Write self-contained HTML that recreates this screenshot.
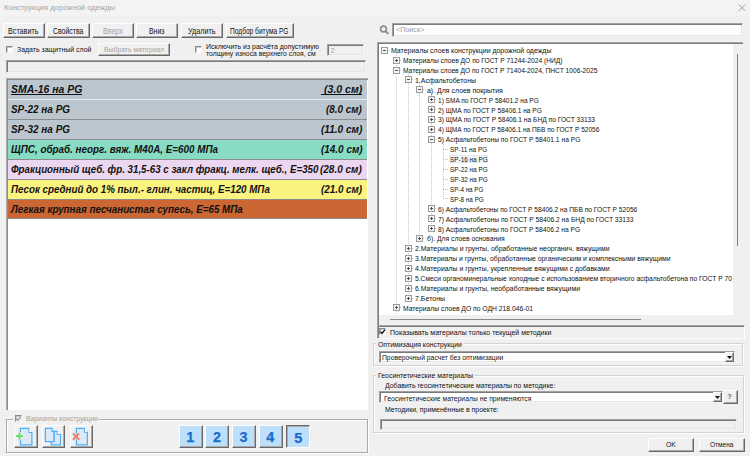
<!DOCTYPE html>
<html><head><meta charset="utf-8"><style>
*{margin:0;padding:0;box-sizing:border-box}
html,body{width:750px;height:456px;overflow:hidden;background:#f0f0f0;font-family:"Liberation Sans",sans-serif;color:#000}
.a{position:absolute}
.t{position:absolute;white-space:nowrap}
</style></head><body>
<div class="a" style="left:0px;top:0px;width:750px;height:16px;background:#f3f3f3"></div>
<div class="t" style="left:4.3px;top:3.9px;font-size:7.7px;line-height:7.7px;color:#a6a6a6;transform:scaleX(0.9900);transform-origin:0 0;">Конструкция дорожной одежды</div>
<svg class="a" style="left:738px;top:3.5px" width="8" height="8"><path d="M0.7 0.5L7.2 7M7.2 0.5L0.7 7" stroke="#999" stroke-width="0.9"/></svg>
<div class="a" style="left:3px;top:23px;width:42px;height:15px;background:#f0f0f0;border-top:1px solid #fdfdfd;border-left:1px solid #fdfdfd;border-right:1px solid #696969;border-bottom:1px solid #696969;box-shadow:inset -1px -1px 0 #a9a9a9"></div>
<div class="t" style="left:8.4px;top:26.61px;font-size:8.4px;line-height:8.4px;color:#111;transform:scaleX(0.8592);transform-origin:0 0;">Вставить</div>
<div class="a" style="left:47px;top:23px;width:42.5px;height:15px;background:#f0f0f0;border-top:1px solid #fdfdfd;border-left:1px solid #fdfdfd;border-right:1px solid #696969;border-bottom:1px solid #696969;box-shadow:inset -1px -1px 0 #a9a9a9"></div>
<div class="t" style="left:53.2px;top:26.61px;font-size:8.4px;line-height:8.4px;color:#111;transform:scaleX(0.8265);transform-origin:0 0;">Свойства</div>
<div class="a" style="left:92px;top:23px;width:41.5px;height:15px;background:#f0f0f0;border-top:1px solid #fdfdfd;border-left:1px solid #fdfdfd;border-right:1px solid #696969;border-bottom:1px solid #696969;box-shadow:inset -1px -1px 0 #a9a9a9"></div>
<div class="t" style="left:103px;top:26.61px;font-size:8.4px;line-height:8.4px;color:#a3a3a3;transform:scaleX(0.8433);transform-origin:0 0;">Вверх</div>
<div class="a" style="left:136px;top:23px;width:42px;height:15px;background:#f0f0f0;border-top:1px solid #fdfdfd;border-left:1px solid #fdfdfd;border-right:1px solid #696969;border-bottom:1px solid #696969;box-shadow:inset -1px -1px 0 #a9a9a9"></div>
<div class="t" style="left:149.3px;top:26.61px;font-size:8.4px;line-height:8.4px;color:#111;transform:scaleX(0.8274);transform-origin:0 0;">Вниз</div>
<div class="a" style="left:181px;top:23px;width:41.5px;height:15px;background:#f0f0f0;border-top:1px solid #fdfdfd;border-left:1px solid #fdfdfd;border-right:1px solid #696969;border-bottom:1px solid #696969;box-shadow:inset -1px -1px 0 #a9a9a9"></div>
<div class="t" style="left:188.3px;top:26.61px;font-size:8.4px;line-height:8.4px;color:#111;transform:scaleX(0.8629);transform-origin:0 0;">Удалить</div>
<div class="a" style="left:225.5px;top:23px;width:68px;height:15px;background:#f0f0f0;border-top:1px solid #fdfdfd;border-left:1px solid #fdfdfd;border-right:1px solid #696969;border-bottom:1px solid #696969;box-shadow:inset -1px -1px 0 #a9a9a9"></div>
<div class="t" style="left:230.2px;top:26.61px;font-size:8.4px;line-height:8.4px;color:#111;transform:scaleX(0.7887);transform-origin:0 0;">Подбор битума PG</div>
<div class="a" style="left:6px;top:46px;width:7px;height:7px;background:#fff;border-top:1px solid #8a8a8a;border-left:1px solid #8a8a8a;border-right:1px solid #f8f8f8;border-bottom:1px solid #f8f8f8;box-shadow:inset 1px 1px 0 #c8c8c8"></div>
<div class="t" style="left:16.8px;top:45.91px;font-size:7.6px;line-height:7.6px;color:#111;transform:scaleX(0.9152);transform-origin:0 0;">Задать защитный слой</div>
<div class="a" style="left:98px;top:43px;width:71.5px;height:13px;background:#f0f0f0;border-top:1px solid #fdfdfd;border-left:1px solid #fdfdfd;border-right:1px solid #696969;border-bottom:1px solid #696969;box-shadow:inset -1px -1px 0 #a9a9a9"></div>
<div class="t" style="left:104px;top:45.71px;font-size:7.6px;line-height:7.6px;color:#a3a3a3;transform:scaleX(0.9008);transform-origin:0 0;">Выбрать материал</div>
<div class="a" style="left:195px;top:46px;width:7px;height:7px;background:#fff;border-top:1px solid #8a8a8a;border-left:1px solid #8a8a8a;border-right:1px solid #f8f8f8;border-bottom:1px solid #f8f8f8;box-shadow:inset 1px 1px 0 #c8c8c8"></div>
<div class="t" style="left:205.7px;top:42.84px;font-size:7.3px;line-height:7.3px;color:#111;transform:scaleX(0.9556);transform-origin:0 0;">Исключить из расчёта допустимую</div>
<div class="t" style="left:205.7px;top:50.04px;font-size:7.3px;line-height:7.3px;color:#111;transform:scaleX(0.9341);transform-origin:0 0;">толщину износа верхнего слоя, см</div>
<div class="a" style="left:327px;top:44px;width:37px;height:12px;background:#f0f0f0;border-top:1px solid #a0a0a0;border-left:1px solid #a0a0a0;border-right:1px solid #f4f4f4;border-bottom:1px solid #f4f4f4;box-shadow:inset 1px 1px 0 #7a7a7a,inset -1px -1px 0 #e6e6e6"></div>
<div class="t" style="left:330.6px;top:47.01px;font-size:7.6px;line-height:7.6px;color:#a3a3a3;">2</div>
<div class="a" style="left:6px;top:60px;width:360px;height:13px;background:#f0f0f0;border-top:1px solid #a0a0a0;border-left:1px solid #a0a0a0;border-right:1px solid #f4f4f4;border-bottom:1px solid #f4f4f4;box-shadow:inset 1px 1px 0 #7a7a7a,inset -1px -1px 0 #e6e6e6"></div>
<div class="a" style="left:6px;top:78px;width:362px;height:331.5px;background:#fff;border-top:1px solid #adadad;border-left:1px solid #adadad;box-shadow:inset 1px 1px 0 #8c8c8c"></div>
<div class="a" style="left:8px;top:80px;width:359px;height:19.2px;background:#bcc6ce"></div>
<div class="a" style="left:11px;top:93.6px;width:71px;height:1.1px;background:#111"></div>
<div class="a" style="left:320.5px;top:93.6px;width:41px;height:1.1px;background:#111"></div>
<div class="t" style="left:11px;top:85.08px;font-size:10.4px;line-height:10.4px;color:#111;font-weight:bold;font-style:italic;transform:scaleX(1.0049);transform-origin:0 0;">SMA-16 на PG</div>
<div class="t" style="left:323.8px;top:85.08px;font-size:10.4px;line-height:10.4px;color:#111;font-weight:bold;font-style:italic;transform:scaleX(1.0154);transform-origin:0 0;">(3.0 см)</div>
<div class="a" style="left:8px;top:99px;width:359px;height:20px;background:#bcc6ce;border-top:1px solid #e8ecef"></div>
<div class="t" style="left:11px;top:105.08px;font-size:10.4px;line-height:10.4px;color:#111;font-weight:bold;font-style:italic;transform:scaleX(0.9557);transform-origin:0 0;">SP-22 на PG</div>
<div class="t" style="left:326.4px;top:105.08px;font-size:10.4px;line-height:10.4px;color:#111;font-weight:bold;font-style:italic;transform:scaleX(0.9465);transform-origin:0 0;">(8.0 см)</div>
<div class="a" style="left:8px;top:119px;width:359px;height:20px;background:#bcc6ce;border-top:1px solid #8c8c8c"></div>
<div class="t" style="left:11px;top:125.08px;font-size:10.4px;line-height:10.4px;color:#111;font-weight:bold;font-style:italic;transform:scaleX(0.9557);transform-origin:0 0;">SP-32 на PG</div>
<div class="t" style="left:320.8px;top:125.08px;font-size:10.4px;line-height:10.4px;color:#111;font-weight:bold;font-style:italic;transform:scaleX(0.9664);transform-origin:0 0;">(11.0 см)</div>
<div class="a" style="left:8px;top:139px;width:359px;height:20px;background:#88dcc4;border-top:1px solid #8c8c8c"></div>
<div class="t" style="left:11px;top:145.08px;font-size:10.4px;line-height:10.4px;color:#111;font-weight:bold;font-style:italic;transform:scaleX(0.9474);transform-origin:0 0;">ЩПС, обраб. неорг. вяж. М40А, Е=600 МПа</div>
<div class="t" style="left:320.5px;top:145.08px;font-size:10.4px;line-height:10.4px;color:#111;font-weight:bold;font-style:italic;transform:scaleX(0.9563);transform-origin:0 0;">(14.0 см)</div>
<div class="a" style="left:8px;top:159px;width:359px;height:20px;background:#ecd7f0;border-top:1px solid #8c8c8c"></div>
<div class="t" style="left:11px;top:165.08px;font-size:10.4px;line-height:10.4px;color:#111;font-weight:bold;font-style:italic;transform:scaleX(0.9367);transform-origin:0 0;">Фракционный щеб. фр. 31,5-63 с закл фракц. мелк. щеб., Е=350</div>
<div class="t" style="left:320.4px;top:165.08px;font-size:10.4px;line-height:10.4px;color:#111;font-weight:bold;font-style:italic;transform:scaleX(0.9586);transform-origin:0 0;">(28.0 см)</div>
<div class="a" style="left:8px;top:179px;width:359px;height:20px;background:#fbf380;border-top:1px solid #8c8c8c"></div>
<div class="t" style="left:11px;top:185.08px;font-size:10.4px;line-height:10.4px;color:#111;font-weight:bold;font-style:italic;transform:scaleX(0.9388);transform-origin:0 0;">Песок средний до 1% пыл.- глин. частиц, Е=120 МПа</div>
<div class="t" style="left:321px;top:185.08px;font-size:10.4px;line-height:10.4px;color:#111;font-weight:bold;font-style:italic;transform:scaleX(0.9448);transform-origin:0 0;">(21.0 см)</div>
<div class="a" style="left:8px;top:199px;width:359px;height:20px;background:#cc6633;border-top:1px solid #8c8c8c"></div>
<div class="t" style="left:11px;top:205.08px;font-size:10.4px;line-height:10.4px;color:#111;font-weight:bold;font-style:italic;transform:scaleX(0.9429);transform-origin:0 0;">Легкая крупная песчанистая супесь, Е=65 МПа</div>
<div class="a" style="left:8px;top:218.2px;width:359px;height:1px;background:#8c8c8c"></div>
<div class="a" style="left:6px;top:419px;width:361.5px;height:34px;border:1px solid #ababab;box-shadow:inset 1px 1px 0 #fff, 1px 1px 0 #fff"></div>
<div class="a" style="left:13px;top:414px;width:86px;height:9px;background:#f0f0f0"></div>
<div class="a" style="left:15.4px;top:414.8px;width:7px;height:7px;background:#f0f0f0;border-top:1px solid #8a8a8a;border-left:1px solid #8a8a8a;border-right:1px solid #f8f8f8;border-bottom:1px solid #f8f8f8;box-shadow:inset 1px 1px 0 #c8c8c8"></div>
<svg class="a" style="left:15.4px;top:414.8px" width="7" height="7"><path d="M1.5 3.6L3 5.4L6 1.6" stroke="#a0a0a0" stroke-width="1.4" fill="none"/></svg>
<div class="t" style="left:25.8px;top:415.14px;font-size:7.3px;line-height:7.3px;color:#a3a3a3;transform:scaleX(0.9319);transform-origin:0 0;">Варианты конструкции</div>
<div class="a" style="left:13.5px;top:425px;width:24px;height:23px;background:#f0f0f0;border-top:1px solid #fdfdfd;border-left:1px solid #fdfdfd;border-right:1px solid #696969;border-bottom:1px solid #696969;box-shadow:inset -1px -1px 0 #a9a9a9"></div>
<div class="a" style="left:41.6px;top:425px;width:23.4px;height:23px;background:#f0f0f0;border-top:1px solid #fdfdfd;border-left:1px solid #fdfdfd;border-right:1px solid #696969;border-bottom:1px solid #696969;box-shadow:inset -1px -1px 0 #a9a9a9"></div>
<div class="a" style="left:69.6px;top:425px;width:23.4px;height:23px;background:#f0f0f0;border-top:1px solid #fdfdfd;border-left:1px solid #fdfdfd;border-right:1px solid #696969;border-bottom:1px solid #696969;box-shadow:inset -1px -1px 0 #a9a9a9"></div>
<svg class="a" style="left:13px;top:424px" width="25" height="24"><path d="M7.4 4.4H15.9V8.3H18.9V20.8H7.4Z" fill="#dde9f7" stroke="#4db0fa" stroke-width="1.25" stroke-linejoin="round"/><path d="M16.4 4.6L18.7 7.8H16.4Z" fill="#fff"/><path d="M6.5 8.2V16.2M2.6 12.2H10.4" stroke="#f0f0f0" stroke-width="3.2"/><path d="M6.5 8.7V15.7M3 12.2H10" stroke="#56e05a" stroke-width="1.7"/></svg>
<svg class="a" style="left:41px;top:424px" width="25" height="24"><path d="M4.4 4.4H11.2V7.4H13.2V17.5H4.4Z" fill="#dde9f7" stroke="#4db0fa" stroke-width="1.25" stroke-linejoin="round"/><path d="M13.2 7.4H16.2V10.4H19.5V20.8H10.1V17.5H13.2Z" fill="#dde9f7" stroke="#4db0fa" stroke-width="1.25" stroke-linejoin="round"/><path d="M16.7 7.6L19.3 10H16.7Z" fill="#fff"/></svg>
<svg class="a" style="left:69px;top:424px" width="25" height="24"><path d="M7.4 4.4H15.4V8.2H18.4V20.8H7.4Z" fill="#dde9f7" stroke="#4db0fa" stroke-width="1.25" stroke-linejoin="round"/><path d="M15.9 4.6L18.2 7.7H15.9Z" fill="#fff"/><path d="M3.7 9.1L10.5 16.1M10.5 9.1L3.7 16.1" stroke="#f0f0f0" stroke-width="3.4"/><path d="M4 9.4L10.2 15.8M10.2 9.4L4 15.8" stroke="#e5806c" stroke-width="2"/></svg>
<div class="a" style="left:178.6px;top:425.2px;width:24.2px;height:22.8px;background:#bddff9;border-top:1px solid #fdfdfd;border-left:1px solid #fdfdfd;border-right:1px solid #696969;border-bottom:1px solid #696969;box-shadow:inset -1px -1px 0 #a9a9a9"></div>
<div class="t" style="left:178.3px;top:429.5px;width:24px;text-align:center;font:bold 14.4px/14.4px 'Liberation Sans',sans-serif;color:#1a6ccc;-webkit-text-stroke:0.25px #1a6ccc">1</div>
<div class="a" style="left:205.2px;top:425.2px;width:24.2px;height:22.8px;background:#bddff9;border-top:1px solid #fdfdfd;border-left:1px solid #fdfdfd;border-right:1px solid #696969;border-bottom:1px solid #696969;box-shadow:inset -1px -1px 0 #a9a9a9"></div>
<div class="t" style="left:204.9px;top:429.5px;width:24px;text-align:center;font:bold 14.4px/14.4px 'Liberation Sans',sans-serif;color:#1a6ccc;-webkit-text-stroke:0.25px #1a6ccc">2</div>
<div class="a" style="left:231.8px;top:425.2px;width:24.2px;height:22.8px;background:#bddff9;border-top:1px solid #fdfdfd;border-left:1px solid #fdfdfd;border-right:1px solid #696969;border-bottom:1px solid #696969;box-shadow:inset -1px -1px 0 #a9a9a9"></div>
<div class="t" style="left:231.5px;top:429.5px;width:24px;text-align:center;font:bold 14.4px/14.4px 'Liberation Sans',sans-serif;color:#1a6ccc;-webkit-text-stroke:0.25px #1a6ccc">3</div>
<div class="a" style="left:258.6px;top:425.2px;width:24.2px;height:22.8px;background:#bddff9;border-top:1px solid #fdfdfd;border-left:1px solid #fdfdfd;border-right:1px solid #696969;border-bottom:1px solid #696969;box-shadow:inset -1px -1px 0 #a9a9a9"></div>
<div class="t" style="left:258.3px;top:429.5px;width:24px;text-align:center;font:bold 14.4px/14.4px 'Liberation Sans',sans-serif;color:#1a6ccc;-webkit-text-stroke:0.25px #1a6ccc">4</div>
<div class="a" style="left:285.6px;top:425.2px;width:24.2px;height:22.8px;background:#bddff9;border-top:1px solid #696969;border-left:1px solid #696969;border-right:1px solid #fdfdfd;border-bottom:1px solid #fdfdfd;box-shadow:inset 1px 1px 0 #a9a9a9"></div>
<div class="t" style="left:286.3px;top:430.5px;width:24px;text-align:center;font:bold 14.4px/14.4px 'Liberation Sans',sans-serif;color:#1a6ccc;-webkit-text-stroke:0.25px #1a6ccc">5</div>
<svg class="a" style="left:379px;top:24px" width="12" height="12"><circle cx="4.5" cy="5" r="2.9" fill="none" stroke="#8c8c8c" stroke-width="1.6"/><path d="M6.6 7.1L9.4 9.9" stroke="#8c8c8c" stroke-width="2"/></svg>
<div class="a" style="left:392px;top:23px;width:350.5px;height:14px;background:#fff;border-top:1px solid #a0a0a0;border-left:1px solid #a0a0a0;border-right:1px solid #f4f4f4;border-bottom:1px solid #f4f4f4;box-shadow:inset 1px 1px 0 #7a7a7a,inset -1px -1px 0 #e6e6e6"></div>
<div class="t" style="left:395.8px;top:26.08px;font-size:7px;line-height:7px;color:#9a9a9a;transform:scaleX(1.0225);transform-origin:0 0;">&lt;Поиск&gt;</div>
<div class="a" style="left:377px;top:42px;width:366px;height:284px;background:#f0f0f0;border-top:1px solid #a4a4a4;border-left:1px solid #a4a4a4;box-shadow:inset 1px 1px 0 #7c7c7c"></div>
<div class="a" style="left:379px;top:44px;width:354px;height:271px;background:#fff"></div>
<div class="a" style="left:389.6px;top:318.7px;width:251.4px;height:1.6px;background:#8a8a8a"></div>
<div class="a" style="left:736.7px;top:54px;width:1.6px;height:192px;background:#808080"></div>
<div class="a" style="left:377px;top:325px;width:367.5px;height:13.5px;background:#f0f0f0;border-top:1px solid #a4a4a4;border-left:1px solid #a4a4a4;border-right:1px solid #fff;border-bottom:1px solid #fff;box-shadow:inset 1px 1px 0 #7c7c7c"></div>
<div class="a" style="left:379.2px;top:328px;width:7px;height:7px;background:#fff;border-top:1px solid #8a8a8a;border-left:1px solid #8a8a8a;border-right:1px solid #f8f8f8;border-bottom:1px solid #f8f8f8;box-shadow:inset 1px 1px 0 #c8c8c8"></div>
<svg class="a" style="left:379.2px;top:328px" width="7" height="7"><path d="M1.5 3.6L3 5.4L6 1.6" stroke="#111" stroke-width="1.4" fill="none"/></svg>
<div class="t" style="left:389.6px;top:328.78px;font-size:7px;line-height:7px;color:#111;transform:scaleX(0.9988);transform-origin:0 0;">Показывать материалы только текущей методики</div>
<div class="a" style="left:395.7px;top:53.2px;width:1px;height:261.79px;background:repeating-linear-gradient(to bottom,#c6c6c6 0 1px,transparent 1px 2px)"></div>
<div class="a" style="left:407.5px;top:73.03px;width:1px;height:225.04px;background:repeating-linear-gradient(to bottom,#c6c6c6 0 1px,transparent 1px 2px)"></div>
<div class="a" style="left:419.3px;top:82.94px;width:1px;height:155.64px;background:repeating-linear-gradient(to bottom,#c6c6c6 0 1px,transparent 1px 2px)"></div>
<div class="a" style="left:431.1px;top:92.86px;width:1px;height:135.81px;background:repeating-linear-gradient(to bottom,#c6c6c6 0 1px,transparent 1px 2px)"></div>
<div class="a" style="left:442.9px;top:142.44px;width:1px;height:56.49px;background:repeating-linear-gradient(to bottom,#c6c6c6 0 1px,transparent 1px 2px)"></div>
<div class="a" style="left:388px;top:49.7px;width:1.8px;height:1px;background:repeating-linear-gradient(to right,#c6c6c6 0 1px,transparent 1px 2px)"></div>
<svg class="a" style="left:381px;top:47px" width="7" height="7"><rect x="0.5" y="0.5" width="6" height="6" fill="#f4f4f4" stroke="#9c9c9c" stroke-width="1"/><path d="M2 3.5H5" stroke="#555" stroke-width="1"/></svg>
<div class="t" style="left:390.8px;top:47.08px;font-size:7px;line-height:7px;color:#111;transform:scaleX(0.9918);transform-origin:0 0;">Материалы слоев конструкции дорожной одежды</div>
<div class="a" style="left:400px;top:59.62px;width:1.9px;height:1px;background:repeating-linear-gradient(to right,#c6c6c6 0 1px,transparent 1px 2px)"></div>
<svg class="a" style="left:393px;top:57px" width="7" height="7"><rect x="0.5" y="0.5" width="6" height="6" fill="#f4f4f4" stroke="#9c9c9c" stroke-width="1"/><path d="M2 3.5H5" stroke="#555" stroke-width="1"/><path d="M3.5 2V5" stroke="#555" stroke-width="1"/></svg>
<div class="t" style="left:402.9px;top:56.99px;font-size:7px;line-height:7px;color:#111;transform:scaleX(0.9516);transform-origin:0 0;">Материалы слоев ДО по ГОСТ Р 71244-2024 (НИД)</div>
<div class="a" style="left:400px;top:69.53px;width:1.9px;height:1px;background:repeating-linear-gradient(to right,#c6c6c6 0 1px,transparent 1px 2px)"></div>
<svg class="a" style="left:393px;top:67px" width="7" height="7"><rect x="0.5" y="0.5" width="6" height="6" fill="#f4f4f4" stroke="#9c9c9c" stroke-width="1"/><path d="M2 3.5H5" stroke="#555" stroke-width="1"/></svg>
<div class="t" style="left:402.9px;top:66.91px;font-size:7px;line-height:7px;color:#111;transform:scaleX(0.9498);transform-origin:0 0;">Материалы слоев ДО по ГОСТ Р 71404-2024, ПНСТ 1006-2025</div>
<div class="a" style="left:412px;top:79.44px;width:1.8px;height:1px;background:repeating-linear-gradient(to right,#c6c6c6 0 1px,transparent 1px 2px)"></div>
<svg class="a" style="left:405px;top:76px" width="7" height="7"><rect x="0.5" y="0.5" width="6" height="6" fill="#f4f4f4" stroke="#9c9c9c" stroke-width="1"/><path d="M2 3.5H5" stroke="#555" stroke-width="1"/></svg>
<div class="t" style="left:414.8px;top:76.82px;font-size:7px;line-height:7px;color:#111;transform:scaleX(0.9939);transform-origin:0 0;">1.Асфальтобетоны</div>
<div class="a" style="left:423px;top:89.36px;width:2.5px;height:1px;background:repeating-linear-gradient(to right,#c6c6c6 0 1px,transparent 1px 2px)"></div>
<svg class="a" style="left:416px;top:86px" width="7" height="7"><rect x="0.5" y="0.5" width="6" height="6" fill="#f4f4f4" stroke="#9c9c9c" stroke-width="1"/><path d="M2 3.5H5" stroke="#555" stroke-width="1"/></svg>
<div class="t" style="left:426.5px;top:86.74px;font-size:7px;line-height:7px;color:#111;transform:scaleX(0.9938);transform-origin:0 0;">а). Для слоев покрытия</div>
<div class="a" style="left:435px;top:99.28px;width:2.3px;height:1px;background:repeating-linear-gradient(to right,#c6c6c6 0 1px,transparent 1px 2px)"></div>
<svg class="a" style="left:428px;top:96px" width="7" height="7"><rect x="0.5" y="0.5" width="6" height="6" fill="#f4f4f4" stroke="#9c9c9c" stroke-width="1"/><path d="M2 3.5H5" stroke="#555" stroke-width="1"/><path d="M3.5 2V5" stroke="#555" stroke-width="1"/></svg>
<div class="t" style="left:438.3px;top:96.65px;font-size:7px;line-height:7px;color:#111;transform:scaleX(0.9325);transform-origin:0 0;">1) SMA по ГОСТ Р 58401.2 на PG</div>
<div class="a" style="left:435px;top:109.19px;width:2.3px;height:1px;background:repeating-linear-gradient(to right,#c6c6c6 0 1px,transparent 1px 2px)"></div>
<svg class="a" style="left:428px;top:106px" width="7" height="7"><rect x="0.5" y="0.5" width="6" height="6" fill="#f4f4f4" stroke="#9c9c9c" stroke-width="1"/><path d="M2 3.5H5" stroke="#555" stroke-width="1"/><path d="M3.5 2V5" stroke="#555" stroke-width="1"/></svg>
<div class="t" style="left:438.3px;top:106.57px;font-size:7px;line-height:7px;color:#111;transform:scaleX(0.9404);transform-origin:0 0;">2) ЩМА по ГОСТ Р 58406.1 на PG</div>
<div class="a" style="left:435px;top:119.11px;width:2.3px;height:1px;background:repeating-linear-gradient(to right,#c6c6c6 0 1px,transparent 1px 2px)"></div>
<svg class="a" style="left:428px;top:116px" width="7" height="7"><rect x="0.5" y="0.5" width="6" height="6" fill="#f4f4f4" stroke="#9c9c9c" stroke-width="1"/><path d="M2 3.5H5" stroke="#555" stroke-width="1"/><path d="M3.5 2V5" stroke="#555" stroke-width="1"/></svg>
<div class="t" style="left:438.3px;top:116.48px;font-size:7px;line-height:7px;color:#111;transform:scaleX(0.9482);transform-origin:0 0;">3) ЩМА по ГОСТ Р 58406.1 на БНД по ГОСТ 33133</div>
<div class="a" style="left:435px;top:129.02px;width:2.3px;height:1px;background:repeating-linear-gradient(to right,#c6c6c6 0 1px,transparent 1px 2px)"></div>
<svg class="a" style="left:428px;top:126px" width="7" height="7"><rect x="0.5" y="0.5" width="6" height="6" fill="#f4f4f4" stroke="#9c9c9c" stroke-width="1"/><path d="M2 3.5H5" stroke="#555" stroke-width="1"/><path d="M3.5 2V5" stroke="#555" stroke-width="1"/></svg>
<div class="t" style="left:438.3px;top:126.4px;font-size:7px;line-height:7px;color:#111;transform:scaleX(0.9379);transform-origin:0 0;">4) ЩМА по ГОСТ Р 58406.1 на ПБВ по ГОСТ Р 52056</div>
<div class="a" style="left:435px;top:138.94px;width:2.3px;height:1px;background:repeating-linear-gradient(to right,#c6c6c6 0 1px,transparent 1px 2px)"></div>
<svg class="a" style="left:428px;top:136px" width="7" height="7"><rect x="0.5" y="0.5" width="6" height="6" fill="#f4f4f4" stroke="#9c9c9c" stroke-width="1"/><path d="M2 3.5H5" stroke="#555" stroke-width="1"/></svg>
<div class="t" style="left:438.3px;top:136.31px;font-size:7px;line-height:7px;color:#111;transform:scaleX(0.9567);transform-origin:0 0;">5) Асфальтобетоны по ГОСТ Р 58401.1 на PG</div>
<div class="a" style="left:443.3px;top:148.85px;width:5.7px;height:1px;background:repeating-linear-gradient(to right,#c6c6c6 0 1px,transparent 1px 2px)"></div>
<div class="t" style="left:450px;top:146.23px;font-size:7px;line-height:7px;color:#111;transform:scaleX(0.9139);transform-origin:0 0;">SP-11 на PG</div>
<div class="a" style="left:443.3px;top:158.76px;width:5.7px;height:1px;background:repeating-linear-gradient(to right,#c6c6c6 0 1px,transparent 1px 2px)"></div>
<div class="a" style="left:448.9px;top:155.3px;width:38.7px;height:8.2px;background:#f3f5f8;border:1px solid #e4e8ee"></div>
<div class="t" style="left:450px;top:156.14px;font-size:7px;line-height:7px;color:#111;transform:scaleX(0.9146);transform-origin:0 0;">SP-16 на PG</div>
<div class="a" style="left:443.3px;top:168.68px;width:5.7px;height:1px;background:repeating-linear-gradient(to right,#c6c6c6 0 1px,transparent 1px 2px)"></div>
<div class="t" style="left:450px;top:166.06px;font-size:7px;line-height:7px;color:#111;transform:scaleX(0.9146);transform-origin:0 0;">SP-22 на PG</div>
<div class="a" style="left:443.3px;top:178.59px;width:5.7px;height:1px;background:repeating-linear-gradient(to right,#c6c6c6 0 1px,transparent 1px 2px)"></div>
<div class="t" style="left:450px;top:175.97px;font-size:7px;line-height:7px;color:#111;transform:scaleX(0.9146);transform-origin:0 0;">SP-32 на PG</div>
<div class="a" style="left:443.3px;top:188.51px;width:5.7px;height:1px;background:repeating-linear-gradient(to right,#c6c6c6 0 1px,transparent 1px 2px)"></div>
<div class="t" style="left:450px;top:185.89px;font-size:7px;line-height:7px;color:#111;transform:scaleX(0.8948);transform-origin:0 0;">SP-4 на PG</div>
<div class="a" style="left:443.3px;top:198.43px;width:5.7px;height:1px;background:repeating-linear-gradient(to right,#c6c6c6 0 1px,transparent 1px 2px)"></div>
<div class="t" style="left:450px;top:195.8px;font-size:7px;line-height:7px;color:#111;transform:scaleX(0.9055);transform-origin:0 0;">SP-8 на PG</div>
<div class="a" style="left:435px;top:208.34px;width:2.3px;height:1px;background:repeating-linear-gradient(to right,#c6c6c6 0 1px,transparent 1px 2px)"></div>
<svg class="a" style="left:428px;top:205px" width="7" height="7"><rect x="0.5" y="0.5" width="6" height="6" fill="#f4f4f4" stroke="#9c9c9c" stroke-width="1"/><path d="M2 3.5H5" stroke="#555" stroke-width="1"/><path d="M3.5 2V5" stroke="#555" stroke-width="1"/></svg>
<div class="t" style="left:438.3px;top:205.72px;font-size:7px;line-height:7px;color:#111;transform:scaleX(0.9465);transform-origin:0 0;">6) Асфальтобетоны по ГОСТ Р 58406.2 на ПБВ по ГОСТ Р 52056</div>
<div class="a" style="left:435px;top:218.25px;width:2.3px;height:1px;background:repeating-linear-gradient(to right,#c6c6c6 0 1px,transparent 1px 2px)"></div>
<svg class="a" style="left:428px;top:215px" width="7" height="7"><rect x="0.5" y="0.5" width="6" height="6" fill="#f4f4f4" stroke="#9c9c9c" stroke-width="1"/><path d="M2 3.5H5" stroke="#555" stroke-width="1"/><path d="M3.5 2V5" stroke="#555" stroke-width="1"/></svg>
<div class="t" style="left:438.3px;top:215.63px;font-size:7px;line-height:7px;color:#111;transform:scaleX(0.9581);transform-origin:0 0;">7) Асфальтобетоны по ГОСТ Р 58406.2 на БНД по ГОСТ 33133</div>
<div class="a" style="left:435px;top:228.17px;width:2.3px;height:1px;background:repeating-linear-gradient(to right,#c6c6c6 0 1px,transparent 1px 2px)"></div>
<svg class="a" style="left:428px;top:225px" width="7" height="7"><rect x="0.5" y="0.5" width="6" height="6" fill="#f4f4f4" stroke="#9c9c9c" stroke-width="1"/><path d="M2 3.5H5" stroke="#555" stroke-width="1"/><path d="M3.5 2V5" stroke="#555" stroke-width="1"/></svg>
<div class="t" style="left:438.3px;top:225.55px;font-size:7px;line-height:7px;color:#111;transform:scaleX(0.9560);transform-origin:0 0;">8) Асфальтобетоны по ГОСТ Р 58406.2 на PG</div>
<div class="a" style="left:423px;top:238.08px;width:2.5px;height:1px;background:repeating-linear-gradient(to right,#c6c6c6 0 1px,transparent 1px 2px)"></div>
<svg class="a" style="left:416px;top:235px" width="7" height="7"><rect x="0.5" y="0.5" width="6" height="6" fill="#f4f4f4" stroke="#9c9c9c" stroke-width="1"/><path d="M2 3.5H5" stroke="#555" stroke-width="1"/><path d="M3.5 2V5" stroke="#555" stroke-width="1"/></svg>
<div class="t" style="left:426.5px;top:235.46px;font-size:7px;line-height:7px;color:#111;transform:scaleX(0.9681);transform-origin:0 0;">б). Для слоев основания</div>
<div class="a" style="left:412px;top:248px;width:1.8px;height:1px;background:repeating-linear-gradient(to right,#c6c6c6 0 1px,transparent 1px 2px)"></div>
<svg class="a" style="left:405px;top:245px" width="7" height="7"><rect x="0.5" y="0.5" width="6" height="6" fill="#f4f4f4" stroke="#9c9c9c" stroke-width="1"/><path d="M2 3.5H5" stroke="#555" stroke-width="1"/><path d="M3.5 2V5" stroke="#555" stroke-width="1"/></svg>
<div class="t" style="left:414.8px;top:245.38px;font-size:7px;line-height:7px;color:#111;transform:scaleX(0.9859);transform-origin:0 0;">2.Материалы и грунты, обработанные неорганич. вяжущими</div>
<div class="a" style="left:412px;top:257.91px;width:1.8px;height:1px;background:repeating-linear-gradient(to right,#c6c6c6 0 1px,transparent 1px 2px)"></div>
<svg class="a" style="left:405px;top:255px" width="7" height="7"><rect x="0.5" y="0.5" width="6" height="6" fill="#f4f4f4" stroke="#9c9c9c" stroke-width="1"/><path d="M2 3.5H5" stroke="#555" stroke-width="1"/><path d="M3.5 2V5" stroke="#555" stroke-width="1"/></svg>
<div class="t" style="left:414.8px;top:255.29px;font-size:7px;line-height:7px;color:#111;transform:scaleX(0.9736);transform-origin:0 0;">3.Материалы и грунты, обработанные органическим и комплексными вяжущими</div>
<div class="a" style="left:412px;top:267.83px;width:1.8px;height:1px;background:repeating-linear-gradient(to right,#c6c6c6 0 1px,transparent 1px 2px)"></div>
<svg class="a" style="left:405px;top:265px" width="7" height="7"><rect x="0.5" y="0.5" width="6" height="6" fill="#f4f4f4" stroke="#9c9c9c" stroke-width="1"/><path d="M2 3.5H5" stroke="#555" stroke-width="1"/><path d="M3.5 2V5" stroke="#555" stroke-width="1"/></svg>
<div class="t" style="left:414.8px;top:265.21px;font-size:7px;line-height:7px;color:#111;transform:scaleX(0.9806);transform-origin:0 0;">4.Материалы и грунты, укрепленные вяжущими с добавками</div>
<div class="a" style="left:412px;top:277.75px;width:1.8px;height:1px;background:repeating-linear-gradient(to right,#c6c6c6 0 1px,transparent 1px 2px)"></div>
<svg class="a" style="left:405px;top:275px" width="7" height="7"><rect x="0.5" y="0.5" width="6" height="6" fill="#f4f4f4" stroke="#9c9c9c" stroke-width="1"/><path d="M2 3.5H5" stroke="#555" stroke-width="1"/><path d="M3.5 2V5" stroke="#555" stroke-width="1"/></svg>
<div class="t" style="left:414.8px;top:275.12px;font-size:7px;line-height:7px;color:#111;transform:scaleX(0.9605);transform-origin:0 0;">5.Смеси органоминеральные холодные с использованием вторичного асфальтобетона по ГОСТ Р 70</div>
<div class="a" style="left:412px;top:287.66px;width:1.8px;height:1px;background:repeating-linear-gradient(to right,#c6c6c6 0 1px,transparent 1px 2px)"></div>
<svg class="a" style="left:405px;top:285px" width="7" height="7"><rect x="0.5" y="0.5" width="6" height="6" fill="#f4f4f4" stroke="#9c9c9c" stroke-width="1"/><path d="M2 3.5H5" stroke="#555" stroke-width="1"/><path d="M3.5 2V5" stroke="#555" stroke-width="1"/></svg>
<div class="t" style="left:414.8px;top:285.04px;font-size:7px;line-height:7px;color:#111;transform:scaleX(0.9828);transform-origin:0 0;">6.Материалы и грунты, необработанные вяжущими</div>
<div class="a" style="left:412px;top:297.57px;width:1.8px;height:1px;background:repeating-linear-gradient(to right,#c6c6c6 0 1px,transparent 1px 2px)"></div>
<svg class="a" style="left:405px;top:295px" width="7" height="7"><rect x="0.5" y="0.5" width="6" height="6" fill="#f4f4f4" stroke="#9c9c9c" stroke-width="1"/><path d="M2 3.5H5" stroke="#555" stroke-width="1"/><path d="M3.5 2V5" stroke="#555" stroke-width="1"/></svg>
<div class="t" style="left:414.8px;top:294.95px;font-size:7px;line-height:7px;color:#111;transform:scaleX(1.0028);transform-origin:0 0;">7.Бетоны</div>
<div class="a" style="left:400px;top:307.49px;width:1.9px;height:1px;background:repeating-linear-gradient(to right,#c6c6c6 0 1px,transparent 1px 2px)"></div>
<svg class="a" style="left:393px;top:304px" width="7" height="7"><rect x="0.5" y="0.5" width="6" height="6" fill="#f4f4f4" stroke="#9c9c9c" stroke-width="1"/><path d="M2 3.5H5" stroke="#555" stroke-width="1"/><path d="M3.5 2V5" stroke="#555" stroke-width="1"/></svg>
<div class="t" style="left:402.9px;top:304.87px;font-size:7px;line-height:7px;color:#111;transform:scaleX(0.9640);transform-origin:0 0;">Материалы слоев ДО по ОДН 218.046-01</div>
<div class="a" style="left:373.4px;top:343px;width:369.6px;height:22.8px;border:1px solid #d3d3d3;box-shadow:inset 1px 1px 0 #fff, 1px 1px 0 #fff"></div>
<div class="a" style="left:376px;top:340px;width:88px;height:7px;background:#f0f0f0"></div>
<div class="t" style="left:378.4px;top:341.18px;font-size:7px;line-height:7px;color:#111;transform:scaleX(0.9783);transform-origin:0 0;">Оптимизация конструкции</div>
<div class="a" style="left:379.2px;top:351px;width:356px;height:12.2px;background:#fff;border-top:1px solid #a0a0a0;border-left:1px solid #a0a0a0;border-right:1px solid #f4f4f4;border-bottom:1px solid #f4f4f4;box-shadow:inset 1px 1px 0 #7a7a7a,inset -1px -1px 0 #e6e6e6"></div>
<div class="t" style="left:381.5px;top:354.48px;font-size:7px;line-height:7px;color:#111;transform:scaleX(0.9671);transform-origin:0 0;">Проверочный расчет без оптимизации</div>
<div class="a" style="left:724.6px;top:352.2px;width:9.8px;height:10.2px;background:#f0f0f0;border-top:1px solid #fdfdfd;border-left:1px solid #fdfdfd;border-right:1px solid #696969;border-bottom:1px solid #696969;box-shadow:inset -1px -1px 0 #a9a9a9"></div>
<svg class="a" style="left:727.3px;top:356.2px" width="6" height="4"><path d="M0 0H5L2.5 3Z" fill="#111"/></svg>
<div class="a" style="left:373.4px;top:374.5px;width:371px;height:58px;border:1px solid #d3d3d3;box-shadow:inset 1px 1px 0 #fff, 1px 1px 0 #fff"></div>
<div class="a" style="left:376px;top:371px;width:98px;height:7px;background:#f0f0f0"></div>
<div class="t" style="left:378.4px;top:371.78px;font-size:7px;line-height:7px;color:#111;transform:scaleX(0.9841);transform-origin:0 0;">Геосинтетические материалы</div>
<div class="t" style="left:384.6px;top:382.18px;font-size:7px;line-height:7px;color:#111;transform:scaleX(0.9880);transform-origin:0 0;">Добавить геосинтетические материалы по методике:</div>
<div class="a" style="left:379.2px;top:391.3px;width:343.8px;height:11.9px;background:#fff;border-top:1px solid #a0a0a0;border-left:1px solid #a0a0a0;border-right:1px solid #f4f4f4;border-bottom:1px solid #f4f4f4;box-shadow:inset 1px 1px 0 #7a7a7a,inset -1px -1px 0 #e6e6e6"></div>
<div class="t" style="left:384.1px;top:394.58px;font-size:7px;line-height:7px;color:#111;transform:scaleX(0.9719);transform-origin:0 0;">Геосинтетические материалы не применяются</div>
<div class="a" style="left:712.5px;top:392.3px;width:9.5px;height:10px;background:#f0f0f0;border-top:1px solid #fdfdfd;border-left:1px solid #fdfdfd;border-right:1px solid #696969;border-bottom:1px solid #696969;box-shadow:inset -1px -1px 0 #a9a9a9"></div>
<svg class="a" style="left:715.2px;top:396.3px" width="6" height="4"><path d="M0 0H5L2.5 3Z" fill="#111"/></svg>
<div class="a" style="left:723.4px;top:389.9px;width:14.6px;height:13.7px;background:#f0f0f0;border-top:1px solid #fdfdfd;border-left:1px solid #fdfdfd;border-right:1px solid #696969;border-bottom:1px solid #696969;box-shadow:inset -1px -1px 0 #a9a9a9"></div>
<div class="t" style="left:727.5px;top:392.68px;font-size:7px;line-height:7px;color:#111;">?</div>
<div class="t" style="left:384.6px;top:405.68px;font-size:7px;line-height:7px;color:#111;transform:scaleX(0.9878);transform-origin:0 0;">Методики, применённые в проекте:</div>
<div class="a" style="left:380px;top:418.6px;width:357.3px;height:11.8px;background:#f0f0f0;border-top:1px solid #a0a0a0;border-left:1px solid #a0a0a0;border-right:1px solid #f4f4f4;border-bottom:1px solid #f4f4f4;box-shadow:inset 1px 1px 0 #7a7a7a,inset -1px -1px 0 #e6e6e6"></div>
<div class="a" style="left:648px;top:438.4px;width:46px;height:13.4px;background:#f0f0f0;border-top:1px solid #fdfdfd;border-left:1px solid #fdfdfd;border-right:1px solid #696969;border-bottom:1px solid #696969;box-shadow:inset -1px -1px 0 #a9a9a9"></div>
<div class="t" style="left:666px;top:441.11px;font-size:7.6px;line-height:7.6px;color:#111;transform:scaleX(0.8922);transform-origin:0 0;">OK</div>
<div class="a" style="left:699.4px;top:438.4px;width:45.6px;height:13.4px;background:#f0f0f0;border-top:1px solid #fdfdfd;border-left:1px solid #fdfdfd;border-right:1px solid #696969;border-bottom:1px solid #696969;box-shadow:inset -1px -1px 0 #a9a9a9"></div>
<div class="t" style="left:709.8px;top:441.11px;font-size:7.6px;line-height:7.6px;color:#111;transform:scaleX(0.8587);transform-origin:0 0;">Отмена</div>
</body></html>
